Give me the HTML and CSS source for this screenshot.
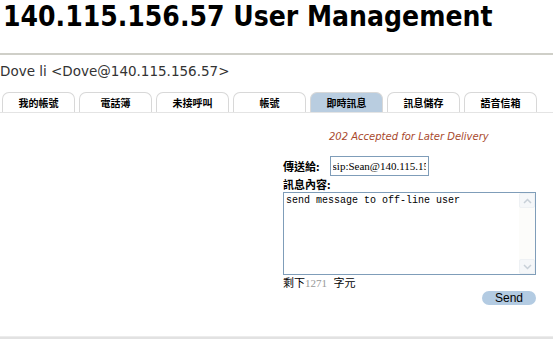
FILE: index.html
```html
<!DOCTYPE html>
<html lang="zh-Hant">
<head>
    <meta charset="UTF-8">
    <title>User Management</title>
    <link rel="stylesheet" href="styles.css">
</head>
<body>
    <h1 class="title">140.115.156.57 User Management</h1>
    <div class="user">Dove li &lt;Dove@140.115.156.57&gt;</div>
    <ul class="tabs">
        <li class="tab">我的帳號</li>
        <li class="tab">電話簿</li>
        <li class="tab">未接呼叫</li>
        <li class="tab">帳號</li>
        <li class="tab active">即時訊息</li>
        <li class="tab">訊息儲存</li>
        <li class="tab">語音信箱</li>
    </ul>
    <div class="content">
        <form class="im-form">
            <div class="status">202 Accepted for Later Delivery</div>
            <div class="to-row">
                <label class="lbl">傳送給:</label>
                <input class="to-input" type="text" value="sip:Sean@140.115.156.57">
            </div>
            <div class="lbl">訊息內容:</div>
            <div class="msg-wrap">
                <textarea class="msg">send message to off-line user</textarea>
                <!-- old-style scrollbar look -->
                <div class="sbar">
                    <span class="sbtn"><svg width="9" height="6" viewBox="0 0 9 6"><path d="M1 5 L4.5 1.5 L8 5" fill="none" stroke="#c8d0d8" stroke-width="1.5"/></svg></span>
                    <span class="sbtn"><svg width="9" height="6" viewBox="0 0 9 6"><path d="M1 1 L4.5 4.5 L8 1" fill="none" stroke="#c8d0d8" stroke-width="1.5"/></svg></span>
                </div>
            </div>
            <div class="remain">剩下<span class="count">1271</span> 字元</div>
            <div class="actions">
                <button class="send" type="button">Send</button>
            </div>
        </form>
    </div>
    <div class="footer"></div>
</body>
</html>
```

FILE: styles.css
```css
body {
    margin: 0;
    background: #fff;
    font-family: "DejaVu Sans", Verdana, sans-serif;
    color: #000;
}
.title {
    margin: 0;
    padding: 0 0 0 3px;
    height: 55px;
    font-family: "DejaVu Sans Condensed", "Liberation Sans", sans-serif;
    font-size: 28px;
    font-weight: bold;
    line-height: 34px;
    white-space: nowrap;
    border-bottom: 2px solid #cfcfc8;
    box-sizing: border-box;
}
.user {
    margin-top: 7px;
    font-size: 13.5px;
    color: #333;
    line-height: 19px;
}
.tabs {
    list-style: none;
    margin: 11px 0 0 0;
    padding: 0 0 0 2px;
    display: flex;
    gap: 4px;
    border-bottom: 1px solid #e4e4e4;
}
.tab {
    width: 71px;
    height: 19px;
    line-height: 19px;
    text-align: center;
    font-family: "Noto Sans CJK TC", sans-serif;
    font-size: 10px;
    font-weight: bold;
    border: 1px solid #d8d8d8;
    border-bottom: none;
    border-radius: 7px 7px 0 0;
}
.tab.active {
    background: #b9cde0;
}
.content {
    display: flex;
    justify-content: flex-end;
    padding-right: 17px;
    height: 223px;
}
.im-form {
    width: 253px;
    font-family: "Noto Sans CJK TC", sans-serif;
    font-size: 11px;
}
.status {
    margin: 18px 0 0 46px;
    font-family: "DejaVu Sans", sans-serif;
    font-size: 10px;
    font-style: italic;
    color: #a8482c;
}
.to-row {
    margin-top: 14px;
    display: flex;
    align-items: center;
    gap: 10px;
}
.lbl {
    font-weight: bold;
    line-height: 16px;
}
.to-input {
    width: 99px;
    height: 20px;
    box-sizing: border-box;
    border: 1px solid #7f9db9;
    padding: 0 2px;
    font-family: "Liberation Serif", serif;
    font-size: 11px;
}
.msg-wrap {
    position: relative;
    width: 253px;
    height: 83px;
}
.msg {
    display: block;
    width: 253px;
    height: 83px;
    box-sizing: border-box;
    border: 1px solid #7f9db9;
    padding: 2px 18px 2px 2px;
    resize: none;
    font-family: "Liberation Mono", monospace;
    font-size: 10px;
    overflow: hidden;
}
.sbar {
    position: absolute;
    top: 1px;
    right: 1px;
    bottom: 1px;
    width: 16px;
    background: #fcfcfa;
    display: flex;
    flex-direction: column;
    justify-content: space-between;
}
.sbtn {
    height: 15px;
    display: flex;
    align-items: center;
    justify-content: center;
    background: #f5f7f9;
    border: 1px solid #eef1f4;
    border-radius: 2px;
    box-sizing: border-box;
}
.remain {
    margin-top: 0;
    line-height: 15px;
}
.count {
    font-family: "Liberation Serif", serif;
    color: #999;
    margin-right: 4px;
}
.actions {
    display: flex;
    justify-content: flex-end;
    margin-top: 0;
}
.send {
    width: 54px;
    height: 14px;
    padding: 0;
    border: none;
    border-radius: 7px;
    background: #b3cbe2;
    font-family: "Liberation Sans", sans-serif;
    font-size: 12px;
    line-height: 14px;
    color: #000;
}
.footer {
    border-top: 1px solid #ececec;
    background: #e2e2e2;
    height: 4px;
}
```
